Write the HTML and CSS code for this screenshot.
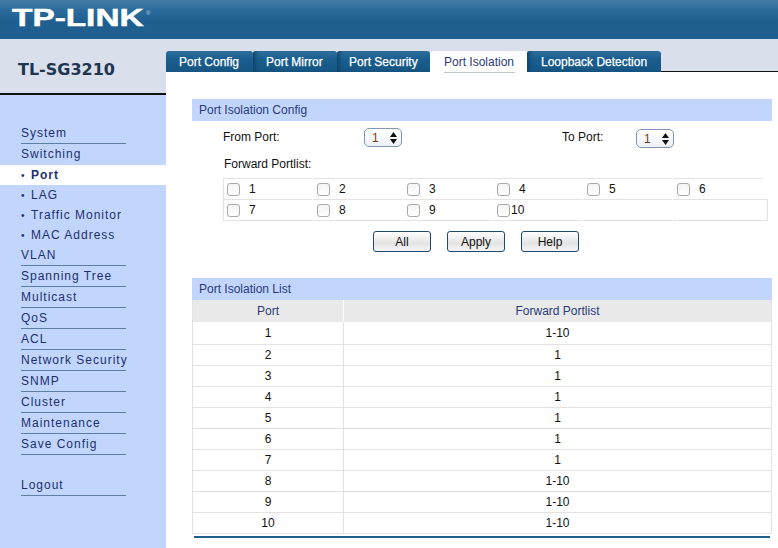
FILE: index.html
```html
<!DOCTYPE html>
<html lang="en">
<head>
<meta charset="utf-8">
<title>TL-SG3210</title>
<link rel="stylesheet" href="styles.css">
</head>
<body>
<header class="top"><div class="logo"><span class="logo-text">TP-LINK</span><span class="reg">®</span></div></header>
<div class="main">
  <aside class="side">
    <div class="model"><span>TL-SG3210</span></div>
    <nav class="menu">
      <a class="item line">System</a>
      <a class="item">Switching</a>
      <a class="sub active"><i>•</i>Port</a>
      <a class="sub"><i>•</i>LAG</a>
      <a class="sub"><i>•</i>Traffic Monitor</a>
      <a class="sub"><i>•</i>MAC Address</a>
      <a class="item line">VLAN</a>
      <a class="item line">Spanning Tree</a>
      <a class="item line">Multicast</a>
      <a class="item line">QoS</a>
      <a class="item line">ACL</a>
      <a class="item line">Network Security</a>
      <a class="item line">SNMP</a>
      <a class="item line">Cluster</a>
      <a class="item line">Maintenance</a>
      <a class="item line">Save Config</a>
      <a class="item line logout">Logout</a>
    </nav>
  </aside>
  <section class="page">
    <div class="tabs">
      <a class="tab t1">Port Config</a>
      <a class="tab t2">Port Mirror</a>
      <a class="tab t3">Port Security</a>
      <a class="tab t4 current"><span>Port Isolation</span></a>
      <a class="tab t5">Loopback Detection</a>
      <div class="tab-rest"></div>
    </div>
    <div class="content">
      <h2 class="bar">Port Isolation Config</h2>
      <div class="ports">
        <label class="lab from">From Port:</label>
        <div class="sel"><span>1</span><svg width="7" height="12" viewBox="0 0 7 12"><path d="M3.500 0 7 5H0zM0 7h7l-3.500 5z" fill="#111"/></svg></div>
        <label class="lab to">To Port:</label>
        <div class="sel sel-low"><span>1</span><svg width="7" height="12" viewBox="0 0 7 12"><path d="M3.500 0 7 5H0zM0 7h7l-3.500 5z" fill="#111"/></svg></div>
      </div>
      <div class="fwd">Forward Portlist:</div>
      <div class="checks">
        <div class="cell"><b class="box"></b><span>1</span></div>
        <div class="cell"><b class="box"></b><span>2</span></div>
        <div class="cell"><b class="box"></b><span>3</span></div>
        <div class="cell"><b class="box"></b><span>4</span></div>
        <div class="cell"><b class="box"></b><span>5</span></div>
        <div class="cell short"><b class="box"></b><span>6</span></div>
        <div class="cell low"><b class="box"></b><span>7</span></div>
        <div class="cell low"><b class="box"></b><span>8</span></div>
        <div class="cell low"><b class="box"></b><span>9</span></div>
        <div class="cell low"><b class="box"></b><span class="ten">10</span></div>
        <div class="cell low"></div>
        <div class="cell low end"></div>
      </div>
      <div class="buttons"><button class="btn">All</button><button class="btn">Apply</button><button class="btn">Help</button></div>
      <h2 class="bar second">Port Isolation List</h2>
      <div class="list">
        <div class="row head"><div>Port</div><div>Forward Portlist</div></div>
        <div class="row first"><div>1</div><div>1-10</div></div>
        <div class="row"><div>2</div><div>1</div></div>
        <div class="row"><div>3</div><div>1</div></div>
        <div class="row"><div>4</div><div>1</div></div>
        <div class="row"><div>5</div><div>1</div></div>
        <div class="row"><div>6</div><div>1</div></div>
        <div class="row"><div>7</div><div>1</div></div>
        <div class="row"><div>8</div><div>1-10</div></div>
        <div class="row"><div>9</div><div>1-10</div></div>
        <div class="row"><div>10</div><div>1-10</div></div>
      </div>
      <div class="endline"></div>
    </div>
  </section>
</div>
</body>
</html>
```
FILE: styles.css
```css
* { box-sizing: border-box; }
html, body { margin: 0; height: 548px; overflow: hidden; }
body { font: 12px "Liberation Sans", Arial, sans-serif; color: #111; background: #fff; }

.top { height: 39px; background: linear-gradient(#447ba3, #2a6b9c 10px, #1f5f90 22px, #1f5f90); }
.logo { padding: 4px 0 0 12px; display: flex; align-items: flex-start; color: #fff; }
.logo-text { font: bold 24px/27px "Liberation Sans", sans-serif; display: inline-block; transform: scaleX(1.39); transform-origin: 0 0; width: 134px; -webkit-text-stroke: .5px #fff; }
.reg { font-size: 6px; line-height: 8px; margin-top: 5px; color: #c7d5e0; }

.main { display: flex; height: 509px; }
.side { width: 166px; flex: none; background: #c2d6fd; }
.model { height: 56px; background: #d9dfeb; border-bottom: 2px solid #111; padding: 21px 0 0 18px; }
.model span { font: bold 16px/19px "DejaVu Sans", sans-serif; color: #1f3550; }
.menu { padding-top: 28px; display: flex; flex-direction: column; }
.item, .sub { display: block; padding-left: 21px; letter-spacing: 1px; color: #1c2f6e; line-height: 20px; height: 21px; }
.item { position: relative; }
.line::after { content: ""; position: absolute; left: 21px; top: 20px; width: 105px; height: 1px; background: #5f7ea4; }
.sub { height: 20px; line-height: 20px; }
.sub i { font-style: normal; font-size: 10px; font-weight: normal; display: inline-block; width: 10px; letter-spacing: 0; }
.active { background: #fff; font-weight: bold; color: #1c2f6e; }
.logout { margin-top: 20px; }

.page { flex: 1; min-width: 0; background: #d9dfeb; display: flex; flex-direction: column; }
.tabs { display: flex; align-items: flex-start; height: 33px; padding-top: 12px; }
.tab { height: 21px; line-height: 22px; color: #fff; -webkit-text-stroke: .25px #fff; background: linear-gradient(#2f6f9c, #1a5e90 8px, #155582); border-radius: 3px 3px 0 0; box-shadow: inset 5px 0 4px -3px #103f63; }
.t1 { width: 87px; box-shadow: none; padding-left: 13px; }
.t2 { width: 84px; padding-left: 13px; }
.t3 { width: 93px; padding-left: 12px; }
.t4 { width: 97px; padding-left: 14px; }
.t5 { width: 134px; padding-left: 14px; }
.current { position: relative; background: #fff; color: #2a3a7a; -webkit-text-stroke: 0; box-shadow: none; height: 22px; }
.current span { display: block; height: 22px; border-bottom: 1px solid #b9c7cf; width: 71px; }
.tab-rest { flex: 1; height: 21px; border-bottom: 1px solid #111; }

.content { flex: 1; background: #fff; padding: 27px 6px 0 26px; }
.bar { margin: 0; height: 22px; background: #c2d6fd; font: 12px/23px "Liberation Sans", sans-serif; color: #2a3a7a; padding-left: 7px; }
.ports { display: flex; align-items: flex-start; height: 22px; margin-top: 6px; padding-top: 1px; }
.lab { color: #111; line-height: 18px; }
.from { margin-left: 31px; width: 141px; }
.to { margin-left: 160px; width: 74px; }
.sel { width: 38px; height: 19px; border: 1px solid #7f97b0; border-radius: 5px; background: linear-gradient(#fff, #eef1f5); display: flex; justify-content: space-between; align-items: center; padding: 0 4px 0 7px; color: #7a3a00; }
.sel-low { margin-top: 1px; }
.fwd { margin: 8px 0 0 32px; height: 15px; line-height: 14px; }
.checks { margin: 6px 0 0 31px; width: 546px; display: grid; grid-template-columns: repeat(5, 89px) 95px; column-gap: 1px; }
.cell { height: 21px; border-top: 1px solid #e2e2e2; display: flex; align-items: center; padding-left: 4px; }
.cell:first-child, .cell:nth-child(7) { border-left: 1px solid #e2e2e2; padding-left: 3px; }
.low { height: 22px; border-bottom: 1px solid #e2e2e2; }
.short { width: 90px; }
.end { border-right: 1px solid #e2e2e2; }
.box { width: 13px; height: 13px; border: 1px solid #a9a9a9; border-radius: 3px; background: linear-gradient(#f4f4f4, #fff); flex: none; }
.cell span { margin-left: 9px; }
.cell .ten { margin-left: 1px; }
.buttons { display: flex; gap: 16px; margin: 10px 0 0 181px; }
.btn { width: 58px; height: 21px; padding: 0; border: 1px solid #1c4a70; border-radius: 3px; background: linear-gradient(#fff, #e4e4e4 60%, #f6f6f6); font: 12px "Liberation Sans", sans-serif; color: #111; }
.second { margin-top: 26px; }
.list { border-left: 1px solid #e2e2e2; border-right: 1px solid #e2e2e2; }
.row { display: grid; grid-template-columns: 151px 1fr; height: 21px; line-height: 20px; text-align: center; border-bottom: 1px solid #e2e2e2; color: #111; }
.row > div:first-child { border-right: 1px solid #e2e2e2; }
.first { height: 23px; line-height: 22px; }
.head { height: 22px; line-height: 22px; background: #e9e9e9; color: #2a3a7a; border-bottom: none; }
.head > div:first-child { border-right: 1px solid #fff; }
.endline { height: 2px; margin: 2px 2px 0 2px; background: #1f5f8b; }
```
